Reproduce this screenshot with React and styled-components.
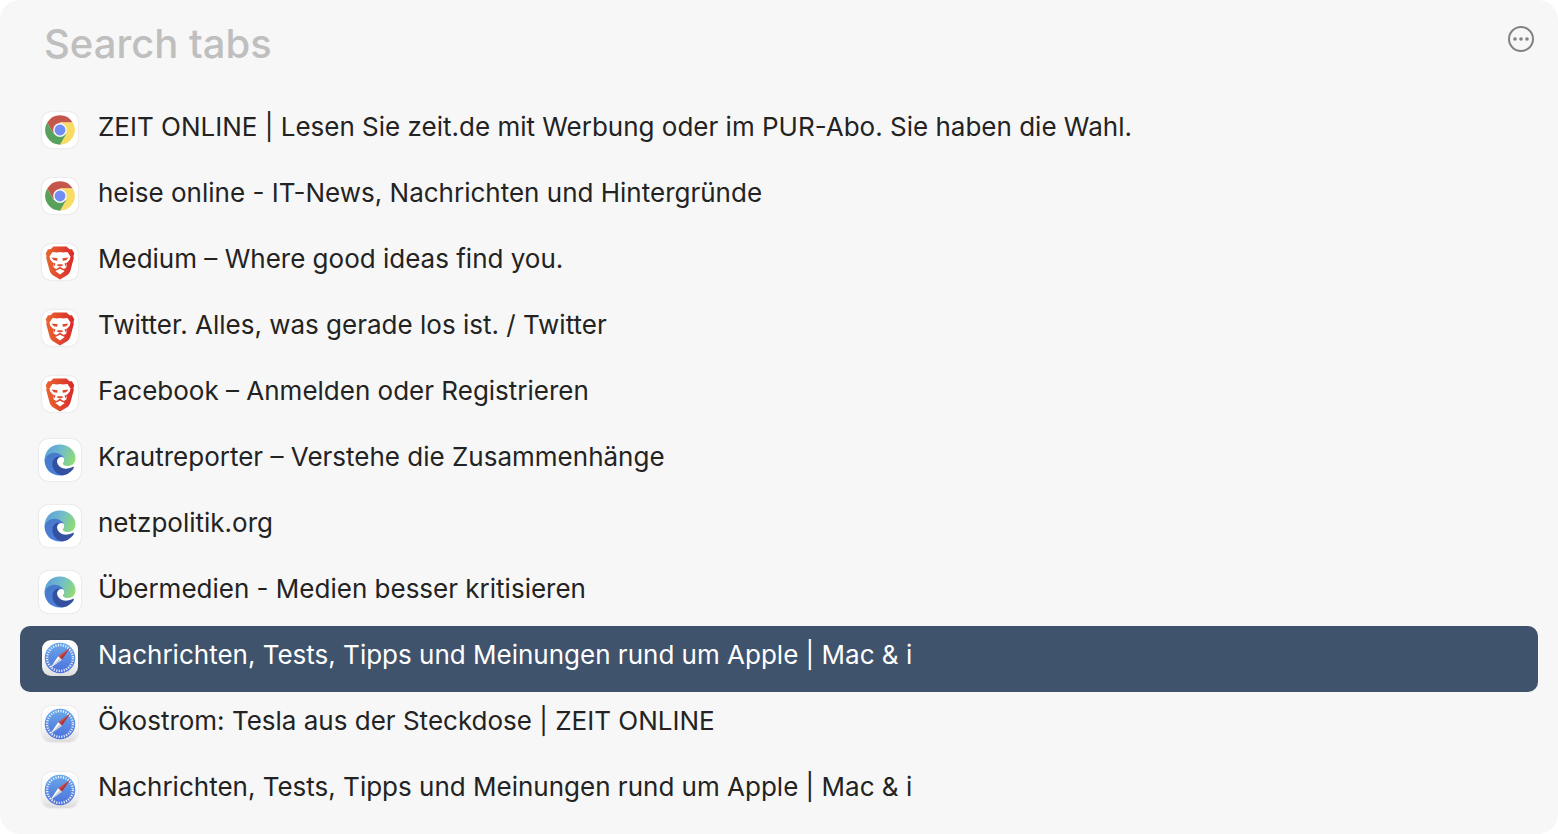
import React, { useState } from "react";
import styled, { createGlobalStyle } from "styled-components";

const GlobalStyle = createGlobalStyle`
  * {
    box-sizing: border-box;
  }

  body {
    margin: 0;
    background: #fff;
    font-family: Inter, "Liberation Sans", sans-serif;
  }
`;

const Panel = styled.main`
  display: flex;
  flex-direction: column;
  min-height: 100vh;
  padding: 0 20px 10px;

  border-radius: 20px;
  background: #f7f7f7;
`;

const SearchBar = styled.header`
  display: flex;
  align-items: flex-start;
  justify-content: space-between;
  height: 98px;
  padding: 16px 4px 0 24px;
`;

const SearchInput = styled.input`
  flex: 1;
  min-width: 0;
  height: 54px;
  padding: 0;

  border: none;
  outline: none;
  background: transparent;

  color: #222;
  font-family: inherit;
  font-size: 40px;
  font-weight: 500;

  &::placeholder {
    color: #bfbfbf;
    opacity: 1;
  }
`;

const MoreButton = styled.button`
  display: flex;
  margin-top: 10px;
  padding: 0;

  border: none;
  background: transparent;
  color: #828282;
`;

const TabList = styled.ul`
  margin: 0;
  padding: 0;
  list-style: none;
`;

const TabButton = styled.button`
  display: flex;
  align-items: center;
  width: 100%;
  height: 66px;
  padding: 0 19px;
  gap: 17px;

  border: none;
  border-radius: 10px;
  background: ${({ $active }) => ($active ? "#40536c" : "transparent")};

  color: ${({ $active }) => ($active ? "#fff" : "#232323")};
  font-family: inherit;
  font-size: 26px;
  text-align: left;
`;

const TabTitle = styled.span`
  padding-bottom: 8px;
  overflow: hidden;
  line-height: 34px;
  text-overflow: ellipsis;
  white-space: nowrap;
`;

const IconSlot = styled.span`
  display: flex;
  flex: none;
  justify-content: center;
  width: 42px;
  padding-bottom: 2px;
`;

const AppTile = styled.span`
  display: flex;
  width: ${({ $size }) => $size}px;
  height: ${({ $size }) => $size}px;

  border-radius: 9px;
  background: ${({ $metal }) =>
    $metal ? "linear-gradient(#fdfdfd 55%, #dcdcdc)" : "#fff"};
  box-shadow: 0 0 2px rgba(0, 0, 0, 0.16);
`;

const ChromeIcon = () => (
  <svg width="36" height="36" viewBox="0 0 36 36" aria-hidden="true">
    <path d="M5.2 10.6A14.7 14.7 0 0 1 30.8 10.6H18L11.6 21.7Z" fill="#c5564c" />
    <path d="M30.8 10.6A14.7 14.7 0 0 1 18 32.7L24.4 21.7L18 10.6Z" fill="#f9dc62" />
    <path d="M18 32.7A14.7 14.7 0 0 1 5.2 10.6L11.6 21.7H24.4Z" fill="#57a15b" />
    <circle cx="18" cy="18" r="6.9" fill="#f4f4f4" />
    <circle cx="18" cy="18" r="5.4" fill="#6f8df2" />
  </svg>
);

const BraveIcon = () => (
  <svg width="36" height="36" viewBox="0 0 36 36" aria-hidden="true">
    <defs>
      <linearGradient id="brave" x1="0" x2="1">
        <stop offset="0" stopColor="#e9662f" />
        <stop offset="1" stopColor="#d9292c" />
      </linearGradient>
    </defs>
    <path
      d="M11.5 2.5H24.5L27.5 5.3H30L32.300 9.500L31.400 12L31.800 14L28.300 27Q27.500 29.500 25.500 31L18 35.500L10.500 31Q8.500 29.500 7.700 27L4.200 14L4.600 12L3.700 9.500L6 5.300H8.500Z"
      fill="url(#brave)"
    />
    <path
      d="M10.500 8L15 8.600L18 8L21 8.600L25.500 8L28.500 12.500L27.800 15.500L24.800 19L24.300 23.500L21.800 25L18 22.800L14.200 25L11.700 23.500L11.200 19L8.200 15.500L7.500 12.500Z"
      fill="#fff"
    />
    <path d="M13.300 27L18 24.800L22.700 27L18 30.500Z" fill="#fff" />
    <path
      d="M9.500 13.400L15.600 14.300L15.200 16.800L11.800 16.300ZM26.500 13.400L20.400 14.300L20.800 16.800L24.200 16.300Z"
      fill="#e0482d"
    />
    <path
      d="M14.500 21.200L18 22.400L21.500 21.200L20 20.300H16Z"
      fill="#e0482d"
    />
    <path d="M10.800 18.500L13.500 19.500L12.500 22.500ZM25.200 18.500L22.500 19.500L23.500 22.500Z" fill="#e0482d" />
  </svg>
);

const EdgeIcon = () => (
  <svg width="42" height="42" viewBox="0 0 42 42" aria-hidden="true">
    <defs>
      <linearGradient id="edgeTop" x1="0" y1="0.3" x2="1" y2="0.6">
        <stop offset="0" stopColor="#5a9edb" />
        <stop offset="0.5" stopColor="#72bccb" />
        <stop offset="1" stopColor="#8fdc73" />
      </linearGradient>
      <linearGradient id="edgeBody" x1="0" y1="0" x2="0.6" y2="1">
        <stop offset="0" stopColor="#4778c6" />
        <stop offset="1" stopColor="#4b80df" />
      </linearGradient>
    </defs>
    <path
      d="M5.500 21C6 11 12.500 5.500 21 5.500C30 5.500 36.500 12 36.500 19C36.500 24 33 27 29 27C25 27 23.500 25.500 24 24C25.500 22.500 25.500 20 24 18C19 12 10 14 5.500 21Z"
      fill="url(#edgeTop)"
    />
    <path
      d="M5.500 21C8 12.500 20 11 25 18.500C21 16.500 17 20 17.500 25C18 31 25 33 34 29C31 34 26 36.500 21 36.500C12 36.500 5.500 30 5.500 21Z"
      fill="url(#edgeBody)"
    />
    <path
      d="M13.500 23.500C14 20 17 17 21 17.500C18.500 18.500 17.500 21.500 18.300 24C20 29 26 31.500 33.500 28C34.500 27.600 35.200 28.200 34.700 29.200C32 33.500 27 36.500 22.500 36.300C16 35 12.800 28.500 13.500 23.500Z"
      fill="#3450a0"
    />
  </svg>
);

const SafariIcon = () => (
  <svg width="36" height="36" viewBox="0 0 36 36" aria-hidden="true">
    <defs>
      <linearGradient id="safari" x1="0" y1="0" x2="0" y2="1">
        <stop offset="0" stopColor="#69a9ea" />
        <stop offset="1" stopColor="#4b6fdb" />
      </linearGradient>
    </defs>
    <circle cx="18" cy="18" r="15.300" fill="url(#safari)" />
    <circle
      cx="18"
      cy="18"
      r="12.900"
      fill="none"
      stroke="#fff"
      strokeOpacity="0.850"
      strokeWidth="2.400"
      strokeDasharray="1.200 1.333"
    />
    <path d="M27.800 8L16.200 16.200L19.800 19.800Z" fill="#d9443c" />
    <path d="M27.800 8L18 18L19.800 19.800Z" fill="#9e3a4c" />
    <path d="M8.200 28L16.200 16.200L19.800 19.800Z" fill="#fff" />
    <path d="M8.200 28L18 18L19.800 19.800Z" fill="#c8ccd4" />
  </svg>
);

const BROWSERS = {
  chrome: { Icon: ChromeIcon, size: 36 },
  brave: { Icon: BraveIcon, size: 36 },
  edge: { Icon: EdgeIcon, size: 42 },
  safari: { Icon: SafariIcon, size: 36, metal: true },
};

const TABS = [
  {
    browser: "chrome",
    title: "ZEIT ONLINE | Lesen Sie zeit.de mit Werbung oder im PUR-Abo. Sie haben die Wahl.",
  },
  { browser: "chrome", title: "heise online - IT-News, Nachrichten und Hintergründe" },
  { browser: "brave", title: "Medium – Where good ideas find you." },
  { browser: "brave", title: "Twitter. Alles, was gerade los ist. / Twitter" },
  { browser: "brave", title: "Facebook – Anmelden oder Registrieren" },
  { browser: "edge", title: "Krautreporter – Verstehe die Zusammenhänge" },
  { browser: "edge", title: "netzpolitik.org" },
  { browser: "edge", title: "Übermedien - Medien besser kritisieren" },
  { browser: "safari", title: "Nachrichten, Tests, Tipps und Meinungen rund um Apple | Mac & i" },
  { browser: "safari", title: "Ökostrom: Tesla aus der Steckdose | ZEIT ONLINE" },
  { browser: "safari", title: "Nachrichten, Tests, Tipps und Meinungen rund um Apple | Mac & i" },
];

const TabRow = ({ tab, active, onSelect }) => {
  const { Icon, size, metal } = BROWSERS[tab.browser];

  return (
    <li>
      <TabButton $active={active} aria-current={active} onClick={onSelect}>
        <IconSlot>
          <AppTile $size={size} $metal={metal}>
            <Icon />
          </AppTile>
        </IconSlot>
        <TabTitle>{tab.title}</TabTitle>
      </TabButton>
    </li>
  );
};

const App = () => {
  const [query, setQuery] = useState("");
  const [selected, setSelected] = useState(8);

  return (
    <>
      <GlobalStyle />
      <Panel>
        <SearchBar>
          <SearchInput
            type="text"
            aria-label="Search tabs"
            placeholder="Search tabs"
            value={query}
            onChange={(e) => setQuery(e.target.value)}
          />
          <MoreButton aria-label="More">
            <svg width="26" height="26" viewBox="0 0 26 26">
              <circle cx="13" cy="13" r="12" fill="none" stroke="currentColor" strokeWidth="2" />
              <circle cx="7" cy="13" r="1.800" fill="currentColor" />
              <circle cx="13" cy="13" r="1.800" fill="currentColor" />
              <circle cx="19" cy="13" r="1.800" fill="currentColor" />
            </svg>
          </MoreButton>
        </SearchBar>

        <TabList>
          {TABS.map((tab, i) => (
            <TabRow
              key={i}
              tab={tab}
              active={i === selected}
              onSelect={() => setSelected(i)}
            />
          ))}
        </TabList>
      </Panel>
    </>
  );
};

export default App;
